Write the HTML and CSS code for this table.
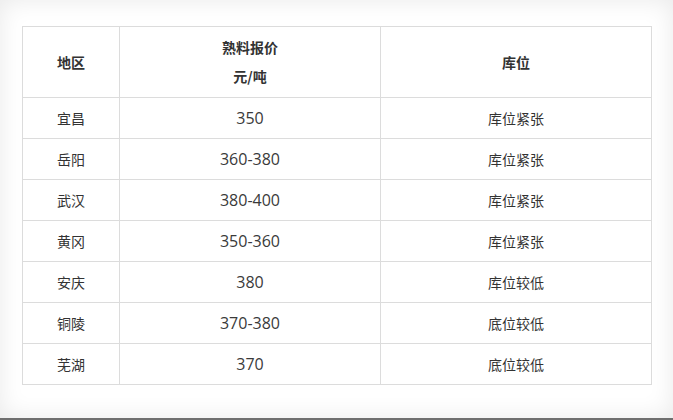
FILE: index.html
```html
<!DOCTYPE html>
<html lang="zh">
<head>
<meta charset="utf-8">
<link rel="stylesheet" href="styles.css">
</head>
<body>
<div class="page">
  <table class="price">
    <colgroup>
      <col class="c1"><col class="c2"><col class="c3">
    </colgroup>
    <thead>
      <tr>
        <th>地区</th>
        <th><div class="hl">熟料报价</div><div class="hl">元/吨</div></th>
        <th>库位</th>
      </tr>
    </thead>
    <tbody>
      <tr><td>宜昌</td><td class="num">350</td><td>库位紧张</td></tr>
      <tr><td>岳阳</td><td class="num">360-380</td><td>库位紧张</td></tr>
      <tr><td>武汉</td><td class="num">380-400</td><td>库位紧张</td></tr>
      <tr><td>黄冈</td><td class="num">350-360</td><td>库位紧张</td></tr>
      <tr><td>安庆</td><td class="num">380</td><td>库位较低</td></tr>
      <tr><td>铜陵</td><td class="num">370-380</td><td>底位较低</td></tr>
      <tr><td>芜湖</td><td class="num">370</td><td>底位较低</td></tr>
    </tbody>
  </table>
</div>
</body>
</html>
```
FILE: styles.css
```css
html, body {
  margin: 0;
  padding: 0;
  background: #fff;
}
.page {
  box-sizing: border-box;
  width: 673px;
  height: 420px;
  padding: 26px 22px 0 22px;
  background: #fff;
  box-shadow: inset 0 0 24px rgba(0, 0, 0, 0.09);
  border-bottom: 2px solid #6f6f6f;
  font-family: "Noto Sans CJK SC", "Noto Sans", sans-serif;
  color: #333;
}
.price {
  border-collapse: collapse;
  table-layout: fixed;
  width: 629px;
  background: #fff;
}
.c1 { width: 97px; }
.c2 { width: 261px; }
.c3 { width: 271px; }
.price th, .price td {
  border: 1px solid #dcdcdc;
  text-align: center;
  vertical-align: middle;
  padding: 0;
  font-size: 14px;
  line-height: 20px;
}
.price th {
  font-weight: bold;
  height: 70px;
}
.price td {
  height: 40px;
  font-weight: normal;
}
.hl {
  line-height: 29px;
}
.price td.num {
  font-family: "Open Sans", "Noto Sans", sans-serif;
  font-size: 16px;
  color: #3a3a3a;
}
```
